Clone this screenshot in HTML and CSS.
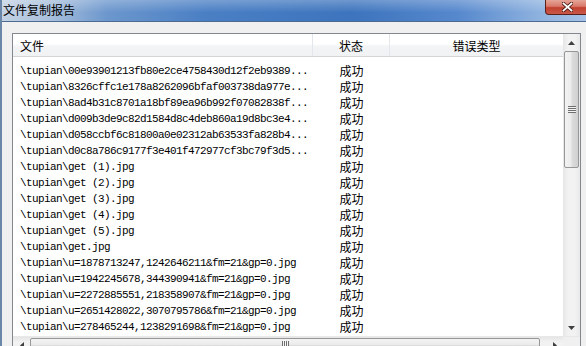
FILE: index.html
```html
<!DOCTYPE html>
<html lang="zh-CN">
<head>
    <meta charset="UTF-8">
    <title>文件复制报告</title>
    <link rel="stylesheet" href="styles.css">
</head>
<body>

<div class="window">
    <div class="titlebar">
        <span class="title">文件复制报告</span>
        <button class="btn-close" title="关闭">
            <svg width="11" height="10" viewBox="0 0 11 10">
                <path d="M1.5 1.5 L9.5 8.5 M9.5 1.5 L1.5 8.5" stroke="#4a1a14" stroke-width="3.6" stroke-linecap="square"/>
                <path d="M1.5 1.5 L9.5 8.5 M9.5 1.5 L1.5 8.5" stroke="#fff" stroke-width="1.8" stroke-linecap="square"/>
            </svg>
        </button>
    </div>

    <div class="client">
        <div class="listview">
            <div class="lv-main">
                <div class="lv-body">
                    <div class="lv-header">
                        <div class="col col-file">文件</div>
                        <div class="col col-status">状态</div>
                        <div class="col col-error">错误类型</div>
                    </div>
                    <div class="lv-rows" id="rows"></div>
                </div>

                <div class="vscroll">
                    <div class="sb-btn">
                        <svg width="7" height="4" viewBox="0 0 7 4"><path d="M0 4 L3.5 0 L7 4 Z" fill="#404040"/></svg>
                    </div>
                    <div class="sb-thumb sb-thumb-v"><span class="grip-v"></span></div>
                    <div class="sb-track"></div>
                    <div class="sb-btn">
                        <svg width="7" height="4" viewBox="0 0 7 4"><path d="M0 0 L7 0 L3.5 4 Z" fill="#404040"/></svg>
                    </div>
                </div>
            </div>

            <div class="hscroll">
                <div class="sb-btn sb-btn-h">
                    <svg width="4" height="7" viewBox="0 0 4 7"><path d="M4 0 L0 3.5 L4 7 Z" fill="#404040"/></svg>
                </div>
                <div class="sb-thumb sb-thumb-h"><span class="grip-h"></span></div>
                <div class="sb-track"></div>
                <div class="sb-btn sb-btn-h">
                    <svg width="4" height="7" viewBox="0 0 4 7"><path d="M0 0 L4 3.5 L0 7 Z" fill="#404040"/></svg>
                </div>
                <div class="sizebox"></div>
            </div>
        </div>
    </div>
</div>

<script>
    // Copy results, one per file
    const results = [
        "\\tupian\\00e93901213fb80e2ce4758430d12f2eb9389...",
        "\\tupian\\8326cffc1e178a8262096bfaf003738da977e...",
        "\\tupian\\8ad4b31c8701a18bf89ea96b992f07082838f...",
        "\\tupian\\d009b3de9c82d1584d8c4deb860a19d8bc3e4...",
        "\\tupian\\d058ccbf6c81800a0e02312ab63533fa828b4...",
        "\\tupian\\d0c8a786c9177f3e401f472977cf3bc79f3d5...",
        "\\tupian\\get (1).jpg",
        "\\tupian\\get (2).jpg",
        "\\tupian\\get (3).jpg",
        "\\tupian\\get (4).jpg",
        "\\tupian\\get (5).jpg",
        "\\tupian\\get.jpg",
        "\\tupian\\u=1878713247,1242646211&fm=21&gp=0.jpg",
        "\\tupian\\u=1942245678,344390941&fm=21&gp=0.jpg",
        "\\tupian\\u=2272885551,218358907&fm=21&gp=0.jpg",
        "\\tupian\\u=2651428022,3070795786&fm=21&gp=0.jpg",
        "\\tupian\\u=278465244,1238291698&fm=21&gp=0.jpg"
    ];

    const rowsEl = document.getElementById('rows');

    results.forEach(name => {
        const row = document.createElement('div');
        row.className = 'row';

        const file = document.createElement('span');
        file.className = 'cell cell-file';
        file.textContent = name;

        const status = document.createElement('span');
        status.className = 'cell cell-status';
        status.textContent = '成功';

        const error = document.createElement('span');
        error.className = 'cell cell-error';

        row.append(file, status, error);
        rowsEl.appendChild(row);
    });
</script>

</body>
</html>
```

FILE: styles.css
```css
* {
    box-sizing: border-box;
}

body {
    margin: 0;
    width: 586px;
    height: 346px;
    overflow: hidden;
    background: #f0f0f0;
    font-family: "Noto Sans CJK SC", "Noto Sans", sans-serif;
    font-size: 12px;
    color: #000;
}

.window {
    height: 346px;
    border-left: 2px solid #6a86a8;
}

/* Title bar */
.titlebar {
    height: 22px;
    display: flex;
    justify-content: space-between;
    align-items: flex-start;
    border-bottom: 1px solid #4d6b90;
    background:
        linear-gradient(to bottom, rgba(255,255,255,0.25), rgba(255,255,255,0) 60%),
        linear-gradient(to right, #c3d2e4 0%, #a9c0dc 8%, #6c97cd 18%, #4a7fc4 35%, #3d74bd 60%, #5688cd 78%, #8eb2df 92%, #a7c3e6 100%);
}

.title {
    padding: 3px 0 0 1px;
    line-height: 14px;
    font-size: 12px;
}

.btn-close {
    width: 44px;
    height: 15px;
    margin-right: -3px;
    padding: 0;
    border: 1px solid #5b1f19;
    border-top: none;
    border-radius: 0 0 4px 4px;
    background: linear-gradient(to bottom, #e6a597 0%, #d8796a 45%, #c2402e 55%, #c9584a 100%);
    display: flex;
    align-items: center;
    justify-content: center;
}

/* Client area */
.client {
    padding: 11px 6px 0 10px;
}

.listview {
    width: 569px;
    height: 330px;
    border: 1px solid #828790;
    background: #fff;
}

.lv-main {
    height: 302px;
    display: flex;
}

.lv-body {
    flex-grow: 1;
    overflow: hidden;
}

.lv-header {
    height: 23px;
    display: flex;
    border-bottom: 1px solid #d5d5d5;
    background: linear-gradient(to bottom, #ffffff 0%, #ffffff 45%, #f3f4f6 55%, #f1f2f4 100%);
}

.col {
    padding-top: 2px;
    line-height: 20px;
    border-right: 1px solid #e3e6ea;
}

.col-file {
    width: 300px;
    padding-left: 7px;
}

.col-status {
    width: 77px;
    text-align: center;
}

.col-error {
    flex-grow: 1;
    text-align: center;
    border-right: none;
}

/* Rows */
.lv-rows {
    padding-top: 6px;
}

.row {
    height: 16px;
    display: flex;
    line-height: 16px;
}

.cell-file {
    width: 300px;
    padding-left: 7px;
    font-family: "Liberation Mono", monospace;
    font-size: 11px;
    letter-spacing: -0.6px;
    white-space: nowrap;
    overflow: hidden;
}

.cell-status {
    width: 77px;
    text-align: center;
}

.cell-error {
    flex-grow: 1;
}

/* Scrollbars */
.vscroll {
    width: 17px;
    display: flex;
    flex-direction: column;
    background: linear-gradient(to right, #e6e6e6, #f2f2f2 30%, #f2f2f2 70%, #e9e9e9);
}

.sb-btn {
    height: 17px;
    flex-shrink: 0;
    display: flex;
    align-items: center;
    justify-content: center;
}

.sb-btn-h {
    width: 17px;
    height: auto;
}

.sb-track {
    flex-grow: 1;
}

.sb-thumb {
    flex-shrink: 0;
    border: 1px solid #979797;
    border-radius: 2px;
    display: flex;
    align-items: center;
    justify-content: center;
}

.sb-thumb-v {
    height: 117px;
    margin: 0 1px;
    background: linear-gradient(to right, #f3f3f3, #ececec 45%, #dcdcdc 55%, #cfcfcf);
}

.sb-thumb-h {
    width: 510px;
    margin: 1px 0;
    background: linear-gradient(to bottom, #f3f3f3, #ececec 45%, #dcdcdc 55%, #cfcfcf);
}

.grip-v {
    width: 8px;
    height: 7px;
    background: repeating-linear-gradient(to bottom, #6e6e6e 0, #6e6e6e 1px, #f4f4f4 1px, #f4f4f4 2px);
}

.grip-h {
    width: 7px;
    height: 8px;
    background: repeating-linear-gradient(to right, #6e6e6e 0, #6e6e6e 1px, #f4f4f4 1px, #f4f4f4 2px);
}

.hscroll {
    height: 17px;
    display: flex;
    border-top: 1px solid #e8e8e8;
    background: linear-gradient(to bottom, #e6e6e6, #f2f2f2 30%, #f2f2f2 70%, #e9e9e9);
}

.sizebox {
    width: 17px;
    background: #f0f0f0;
}
```
